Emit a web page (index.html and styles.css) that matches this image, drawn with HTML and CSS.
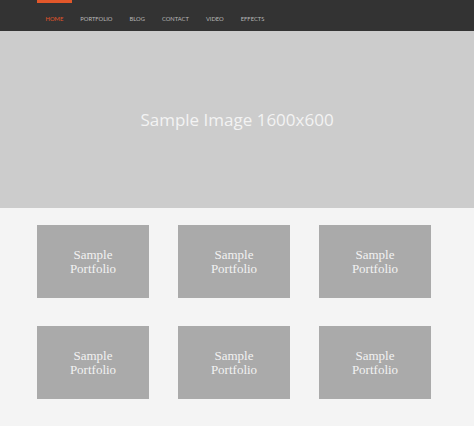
FILE: index.html
```html
<!DOCTYPE html>
<html>
<head>
<meta charset="utf-8">
<link rel="stylesheet" href="styles.css">
</head>
<body>
<nav class="nav">
  <a class="nav-link active">Home</a>
  <a class="nav-link">Portfolio</a>
  <a class="nav-link">Blog</a>
  <a class="nav-link">Contact</a>
  <a class="nav-link">Video</a>
  <a class="nav-link">Effects</a>
</nav>
<header class="hero">Sample Image 1600x600</header>
<section class="portfolio">
  <div class="grid">
    <div class="card">Sample<br>Portfolio</div>
    <div class="card">Sample<br>Portfolio</div>
    <div class="card">Sample<br>Portfolio</div>
    <div class="card">Sample<br>Portfolio</div>
    <div class="card">Sample<br>Portfolio</div>
    <div class="card">Sample<br>Portfolio</div>
  </div>
</section>
</body>
</html>
```
FILE: styles.css
```css
html, body {
  margin: 0;
  padding: 0;
  background: #ffffff;
}
.nav {
  height: 31px;
  background: #333333;
  display: flex;
  padding-left: 37px;
}
.nav-link {
  display: flex;
  align-items: center;
  padding: 2px 8.5px 0;
  font-family: Lato, "Liberation Sans", sans-serif;
  font-size: 5.8px;
  font-weight: 400;
  text-transform: uppercase;
  color: #b8b8b8;
  border-top: 3px solid transparent;
  box-sizing: border-box;
  height: 31px;
}
.nav-link.active {
  color: #e2572a;
  border-top-color: #e2572a;
}
.hero {
  height: 177px;
  background: #cccccc;
  display: flex;
  align-items: center;
  justify-content: center;
  font-family: "Open Sans", sans-serif;
  font-size: 17px;
  color: #f3f3f3;
}
.portfolio {
  background: #f4f4f4;
  padding: 17px 0 27px 37px;
}
.grid {
  display: grid;
  grid-template-columns: repeat(3, 112px);
  column-gap: 29px;
  row-gap: 28px;
}
.card {
  height: 73px;
  background: #aaaaaa;
  display: flex;
  align-items: center;
  justify-content: center;
  text-align: center;
  font-family: "Liberation Serif", serif;
  font-size: 13px;
  line-height: 13.5px;
  color: #f2f2f2;
}
```
